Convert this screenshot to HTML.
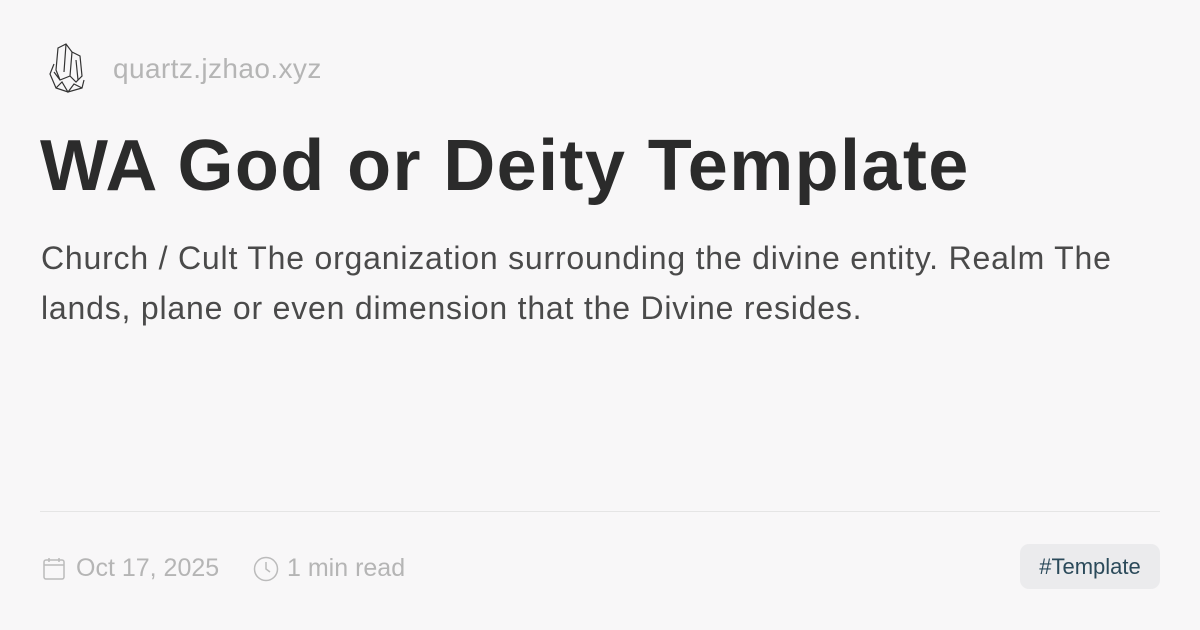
<!DOCTYPE html>
<html><head><meta charset="utf-8"><style>
body{margin:0;width:1200px;height:630px;background:#f8f7f8;font-family:"Liberation Sans",sans-serif;position:relative;overflow:hidden}
.site{position:absolute;left:113px;top:53px;font-size:28px;letter-spacing:0.4px;color:#b5b5b5}
h1{position:absolute;left:40px;top:125px;margin:0;font-size:72px;font-weight:bold;color:#2b2b2b;letter-spacing:1.4px}
.desc{position:absolute;left:41px;top:233px;width:1130px;font-size:32px;letter-spacing:0.8px;line-height:50px;color:#4a4a4a}
.hr{position:absolute;left:40px;right:40px;top:511px;border-top:1px solid #e5e5e5}
.meta{position:absolute;top:554px;font-size:25px;color:#b5b5b5}
.tag{position:absolute;left:1020px;top:544px;width:140px;height:45px;background:#ebebed;border-radius:9px;font-size:22px;color:#2b4a5a;line-height:45px;text-align:center}
</style></head><body>
<svg style="position:absolute;left:48px;top:42px" width="40" height="52" viewBox="0 0 40 52" fill="none" stroke="#333" stroke-width="1.2">
<path d="M10 6 L18 2 L24 10 L22 34 L12 38 L8 28 Z M18 2 L16 30 M24 10 L32 14 L34 34 L28 40 L22 34 M28 18 L30 38 M6 22 L2 32 L8 46 L20 50 L34 46 L36 38 M8 46 L14 40 L20 50 L26 42 L34 46 M12 38 L6 30"/>
</svg>
<div class="site">quartz.jzhao.xyz</div>
<h1>WA God or Deity Template</h1>
<div class="desc">Church / Cult The organization surrounding the divine entity. Realm The lands, plane or even dimension that the Divine resides.</div>
<div class="hr"></div>
<svg style="position:absolute;left:43px;top:557px" width="22" height="24" viewBox="0 0 22 24" fill="none" stroke="#bbb" stroke-width="1.5"><rect x="1" y="3" width="20" height="19" rx="2"/><path d="M1 8h20M6 1v4M16 1v4"/></svg>
<div class="meta" style="left:76px">Oct 17, 2025</div>
<svg style="position:absolute;left:253px;top:556px" width="26" height="26" viewBox="0 0 26 26" fill="none" stroke="#bbb" stroke-width="1.5"><circle cx="13" cy="13" r="11.5"/><path d="M13 6v7l4 3"/></svg>
<div class="meta" style="left:287px">1 min read</div>
<div class="tag">#Template</div>
</body></html>
